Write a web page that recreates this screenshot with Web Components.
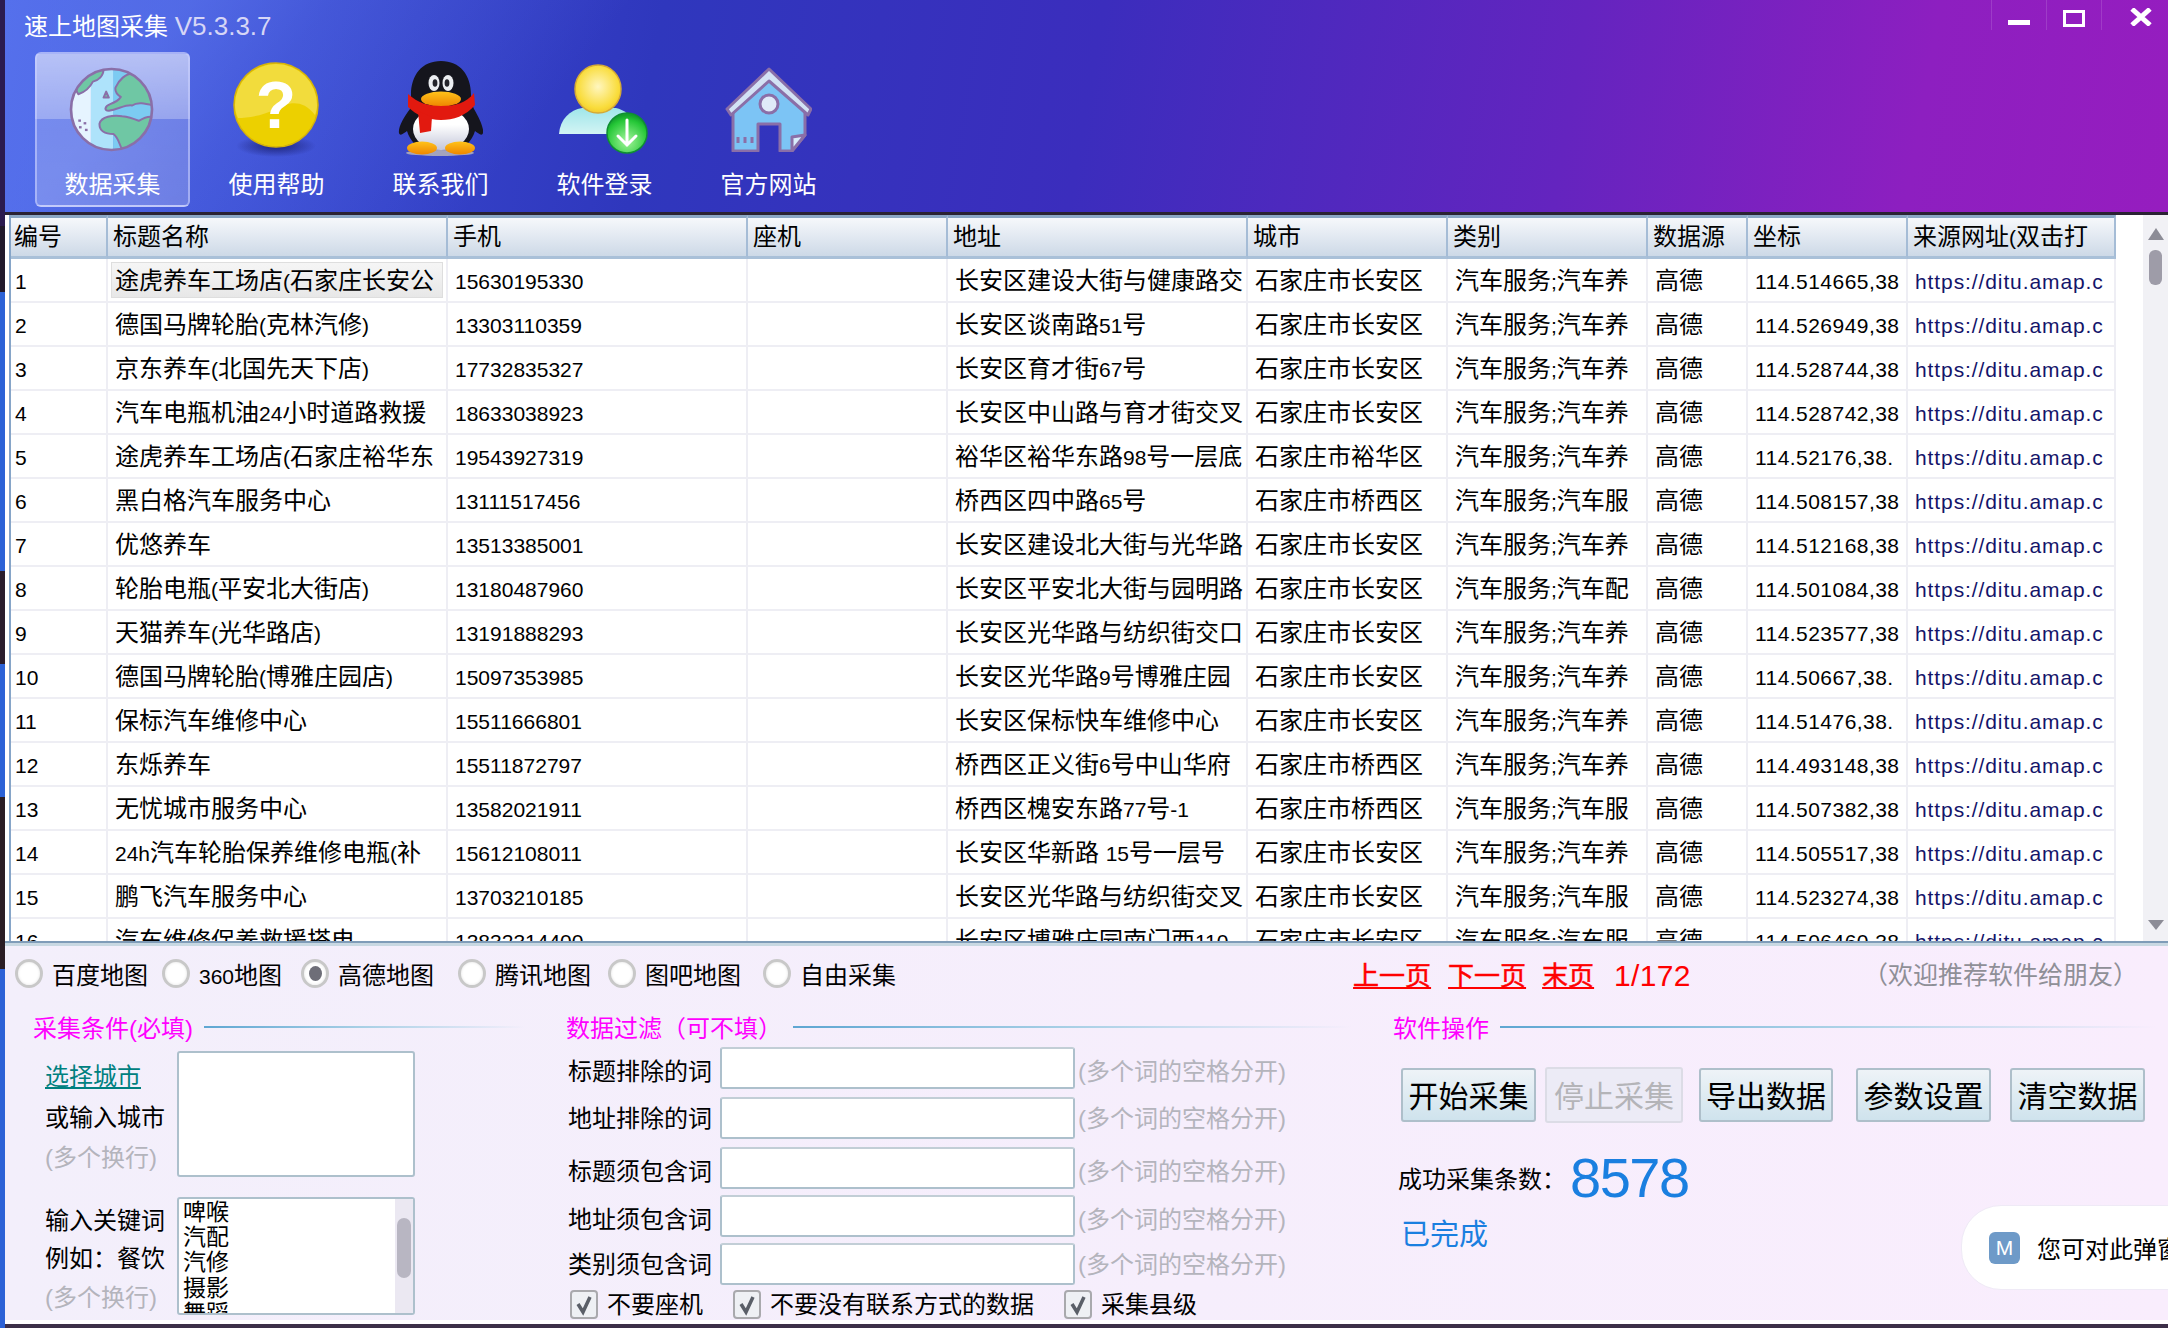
<!DOCTYPE html>
<html lang="zh">
<head>
<meta charset="utf-8">
<title>速上地图采集</title>
<style>
    html, body { margin: 0; padding: 0; width: 2168px; height: 1328px; overflow: hidden; background: #2a2233; }
    body { font-family: "Liberation Sans", "Noto Sans CJK SC", sans-serif; font-size: 24px; color: #000; }
</style>
</head>
<body>

<app-window>
    <app-header>
        <span slot="title">速上地图采集 <span style="font-size:26px;color:#d6d6f6">V5.3.3.7</span></span>
        <tool-tile icon="globe" active>数据采集</tool-tile>
        <tool-tile icon="help">使用帮助</tool-tile>
        <tool-tile icon="penguin">联系我们</tool-tile>
        <tool-tile icon="user">软件登录</tool-tile>
        <tool-tile icon="house">官方网站</tool-tile>
    </app-header>

    <data-table></data-table>

    <control-panel>
        <radio-opt slot="top">百度地图</radio-opt>
        <radio-opt slot="top" style="margin-left:14px"><span style="font-size:21px">360</span>地图</radio-opt>
        <radio-opt slot="top" style="margin-left:19px" checked>高德地图</radio-opt>
        <radio-opt slot="top" style="margin-left:24px">腾讯地图</radio-opt>
        <radio-opt slot="top" style="margin-left:17px">图吧地图</radio-opt>
        <radio-opt slot="top" style="margin-left:22px">自由采集</radio-opt>
        <page-nav slot="top"></page-nav>
        <span slot="top" style="margin-left:auto;padding-right:30px;font-size:25px;color:#8f8f97">（欢迎推荐软件给朋友）</span>

        <section-title slot="col1">采集条件(必填)</section-title>
        <label-box slot="col1" style="margin-top:7px" lh="40.5" h="126">
            <a style="color:#008080;text-decoration:underline">选择城市</a><br>
            或输入城市<br>
            <span style="color:#b4b4bc">(多个换行)</span>
        </label-box>
        <label-box slot="col1" style="margin-top:18px;--pt:5px" lh="38.5" h="118" list="啤喉,汽配,汽修,摄影,舞蹈">
            输入关键词<br>
            例如：餐饮<br>
            <span style="color:#b4b4bc">(多个换行)</span>
        </label-box>

        <section-title slot="col2">数据过滤（可不填）</section-title>
        <filter-row slot="col2" style="margin-top:3px">标题排除的词</filter-row>
        <filter-row slot="col2" style="margin-top:8px;--up:6px">地址排除的词</filter-row>
        <filter-row slot="col2" style="margin-top:8px">标题须包含词</filter-row>
        <filter-row slot="col2" style="margin-top:6px">地址须包含词</filter-row>
        <filter-row slot="col2" style="margin-top:6px;--up:6px">类别须包含词</filter-row>
        <check-row slot="col2">
            <check-opt>不要座机</check-opt>
            <check-opt>不要没有联系方式的数据</check-opt>
            <check-opt>采集县级</check-opt>
        </check-row>

        <section-title slot="col3" style="margin-right:11px">软件操作</section-title>
        <action-row slot="col3">
            <soft-button style="width:135px">开始采集</soft-button>
            <soft-button style="width:138px;margin-left:9px" disabled>停止采集</soft-button>
            <soft-button style="width:134px;margin-left:16px">导出数据</soft-button>
            <soft-button style="width:135px;margin-left:23px">参数设置</soft-button>
            <soft-button style="width:135px;margin-left:19px">清空数据</soft-button>
        </action-row>
        <count-line slot="col3" value="8578" status="已完成">成功采集条数：</count-line>

        <note-popup slot="over">您可对此弹窗</note-popup>
    </control-panel>
</app-window>

<script>
// every element here is only markup + css, so one small helper covers them
function define(name, css, markup, setup){
    customElements.define(name, class extends HTMLElement {
        constructor(){
            super();
            this.attachShadow({mode: 'open'});
        }
        connectedCallback(){
            let body = typeof markup === 'function' ? markup(this) : markup;
            this.shadowRoot.innerHTML = `<style>${css}</style>${body}`;
            if(setup) setup(this, this.shadowRoot);
        }
    });
}

const ICONS = {
    globe: `<svg width="85" height="87" viewBox="0 0 256 256" style="margin:12px 0 0 -2px">
        <defs><clipPath id="g"><circle cx="128" cy="128" r="122"/></clipPath></defs>
        <g clip-path="url(#g)">
            <rect width="66" height="256" fill="#e6f4ff"/>
            <rect x="66" width="67" height="256" fill="#aee3fb"/>
            <rect x="133" width="123" height="256" fill="#7ccbf2"/>
            <g fill="#6fc7a4" stroke="#8a6fa8" stroke-width="6" stroke-linejoin="round">
                <path d="M26 52C48 20 78 6 104 6C104 28 88 40 72 44C62 64 46 76 28 82C20 72 20 62 26 52Z"/>
                <path d="M140 62C150 40 170 18 196 20C226 44 248 80 254 116C230 110 206 104 190 116C174 112 150 126 120 132C104 132 108 118 124 112C140 106 150 100 156 90C146 84 138 74 140 62Z"/>
                <path d="M92 170C98 150 130 144 160 148C180 150 196 156 210 162C230 150 240 148 250 150C238 200 212 244 164 254C150 236 152 216 134 202C108 202 90 192 92 170Z"/>
                <path d="M104 92L112 74L120 92Z"/>
            </g>
            <g fill="#8a6fa8"><rect x="28" y="158" width="8" height="7"/><rect x="44" y="166" width="8" height="7"/><rect x="30" y="178" width="8" height="7"/><rect x="48" y="186" width="8" height="7"/></g>
        </g>
        <circle cx="128" cy="128" r="122" fill="none" stroke="#8a6fa8" stroke-width="8"/>
    </svg>`,
    help: `<svg width="89" height="95" viewBox="0 0 89 95" style="margin-top:8px">
        <defs>
            <radialGradient id="s"><stop offset="0" stop-color="#12145c" stop-opacity=".75"/><stop offset="1" stop-color="#12145c" stop-opacity="0"/></radialGradient>
        </defs>
        <ellipse cx="44" cy="84" rx="40" ry="11" fill="url(#s)"/>
        <circle cx="44" cy="43" r="42" fill="#ecd000" stroke="#d6b30a" stroke-width="1.5"/>
        <path d="M3 43A41 41 0 0 1 85 43C85 47 84 50 83 53C70 36 55 41 44 47C30 54 15 56 6 56C4 52 3 47 3 43Z" fill="#f2dc3c"/>
        <text x="44" y="66" text-anchor="middle" font-family="Liberation Sans" font-weight="700" font-size="66" fill="#fff">?</text>
    </svg>`,
    penguin: `<svg width="85" height="95" viewBox="0 0 85 95" style="margin:7px 0 0 -1px">
        <defs>
            <linearGradient id="b" x1="0" y1="0" x2="0" y2="1"><stop offset=".4" stop-color="#fff"/><stop offset="1" stop-color="#c4c7da"/></linearGradient>
            <linearGradient id="o" x1="0" y1="0" x2="0" y2="1"><stop offset="0" stop-color="#ffc21a"/><stop offset="1" stop-color="#ee8600"/></linearGradient>
        </defs>
        <ellipse cx="42" cy="92" rx="34" ry="3" fill="#a3a3bd"/>
        <path d="M43 0C62 0 73 14 73 34C73 40 74 44 76 48C82 58 86 68 85 72C84 76 80 72 77 70C74 80 66 88 60 88L26 88C20 88 12 80 9 70C6 72 2 76 1 72C0 66 6 56 12 48C13 42 13 38 13 34C13 14 24 0 43 0Z" fill="#15151d"/>
        <ellipse cx="43" cy="68" rx="28" ry="21" fill="url(#b)"/>
        <ellipse cx="36" cy="22" rx="5.5" ry="8" fill="#eceef2"/><ellipse cx="50" cy="22" rx="5.5" ry="8" fill="#eceef2"/>
        <ellipse cx="37" cy="22" rx="2.4" ry="3.8" fill="#23232b"/><ellipse cx="49" cy="22" rx="2.4" ry="3.8" fill="#23232b"/>
        <ellipse cx="43" cy="38" rx="20" ry="7.5" fill="url(#o)"/>
        <path d="M10 33C20 42 30 45 43 45C58 45 68 42 76 32L77 44C68 55 55 59 43 59C30 59 18 54 10 46Z" fill="#e2190f"/>
        <path d="M20 50L34 56L33 70L22 72Z" fill="#e2190f"/>
        <ellipse cx="24" cy="87" rx="15" ry="6.5" fill="url(#o)"/><ellipse cx="62" cy="87" rx="15" ry="6.5" fill="url(#o)"/>
    </svg>`,
    user: `<svg width="90" height="90" viewBox="0 0 90 90" style="margin:10px 0 0 -4px">
        <defs>
            <radialGradient id="h" cx=".5" cy=".45" r=".6"><stop offset="0" stop-color="#fff6bf"/><stop offset=".75" stop-color="#f9dc3a"/><stop offset="1" stop-color="#eec22a"/></radialGradient>
            <linearGradient id="t" x1="0" y1="0" x2="0" y2="1"><stop offset="0" stop-color="#9fe6ea"/><stop offset="1" stop-color="#d3f4f4"/></linearGradient>
            <radialGradient id="c" cx=".5" cy=".7" r=".65"><stop offset="0" stop-color="#a2f59a"/><stop offset=".8" stop-color="#25c737"/><stop offset="1" stop-color="#13a02c"/></radialGradient>
        </defs>
        <path d="M1 70C2 55 12 46 24 44L58 44C66 46 72 50 75 58L75 70Z" fill="url(#t)"/>
        <ellipse cx="40" cy="25" rx="23" ry="24" fill="url(#h)" stroke="#d4a937" stroke-width="1.5"/>
        <circle cx="69" cy="69" r="20" fill="url(#c)" stroke="#0f8f33" stroke-width="1.5"/>
        <path d="M69 56V81M60 72L69 81L78 72" fill="none" stroke="#fff" stroke-width="3" stroke-linecap="round"/>
    </svg>`,
    house: `<svg width="87" height="85" viewBox="0 0 87 85" style="margin-top:13px">
        <g stroke="#8a6fa8" stroke-width="3" stroke-linejoin="round">
            <path d="M8 42L44 10L80 42V68L67 84H55V57H33V84H8Z" fill="#7cc4f5"/>
            <path d="M2 42L44 2L86 42L83 48L44 14L6 48Z" fill="#d3e2f5"/>
            <path d="M67 84V70L80 68Z" fill="#d8ecfb"/>
            <circle cx="44" cy="37" r="9" fill="#dfeaf8"/>
            <path d="M13 70V76M20 70V76M27 70V76" fill="none"/>
        </g>
    </svg>`
};

define('app-window', `
    :host { display: flex; width: 2168px; height: 1328px; }
    .edge { width: 5px; flex: none; background: linear-gradient(180deg, #2b1b50 0 17%, #21192b 17% 22%, #2c62d6 22% 43%, #2a1d2c 43% 50%, #2c62d6 50% 60%, #2a1d24 60% 73%, #2c62d6 73% 100%); }
    .main { flex: 1; min-width: 0; display: flex; flex-direction: column; }
    .foot { height: 4px; background: #fff; flex: none; }
    .desk { height: 4px; background: #3c2f48; flex: none; }
`, `<div class="edge"></div><div class="main"><slot></slot><div class="foot"></div><div class="desk"></div></div>`);

define('app-header', `
    :host { display: block; flex: none; height: 212px; color: #fff; overflow: hidden;
        background:
            linear-gradient(128deg, rgba(120,150,255,.38) 0 8%, rgba(120,150,255,.2) 14%, rgba(120,150,255,0) 27%),
            linear-gradient(100deg, #3f58e0 0%, #2f37bd 30%, #3b2dbd 50%, #6424bf 72%, #8d1fc0 88%, #961dbf 100%); }
    .bar { display: flex; height: 52px; padding-left: 19px; line-height: 52px; }
    .ctl { margin-left: auto; display: flex; height: 30px; line-height: 0; }
    .ctl div { box-sizing: border-box; height: 30px; width: 55px; display: flex; justify-content: center;
        border-left: 1px solid rgba(255,255,255,.13); }
    .ctl div:last-child { width: 67px; padding-left: 12px; }
    .min { width: 22px; height: 5px; margin-top: 20px; background: #fff; }
    .max { box-sizing: border-box; width: 22px; height: 17px; margin-top: 10px; border: 3px solid #fff; }
    svg { margin-top: 8px; }
    .tiles { display: flex; gap: 9px; padding-left: 30px; }
`, `<div class="bar"><slot name="title"></slot>
        <div class="ctl"><div><span class="min"></span></div><div><span class="max"></span></div>
        <div><svg width="22" height="18" viewBox="0 0 22 18"><path d="M2 1L20 17M20 1L2 17" stroke="#fff" stroke-width="5"/></svg></div></div>
    </div>
    <div class="tiles"><slot></slot></div>`);

define('tool-tile', `
    :host { display: flex; flex-direction: column; align-items: center; box-sizing: border-box; width: 155px; height: 155px;
        border: 2px solid transparent; border-radius: 6px; color: #fff; }
    :host([active]) { border-color: rgba(205,212,255,.55);
        background: linear-gradient(180deg, rgba(255,255,255,.58) 0, rgba(255,255,255,.42) 43%, rgba(255,255,255,.2) 43%, rgba(255,255,255,.22) 100%); }
    .ic { height: 107px; flex: none; }
    svg { display: block; }
    .tx { line-height: 48px; }
`, el => `<div class="ic">${ICONS[el.getAttribute('icon')]}</div><div class="tx"><slot></slot></div>`);

const COLUMNS = [98, 340, 300, 200, 300, 200, 200, 100, 160, 208];
const HEADS = ['编号', '标题名称', '手机', '座机', '地址', '城市', '类别', '数据源', '坐标', '来源网址(双击打'];
const ROWS = [
    ['途虎养车工场店(石家庄长安公', '15630195330', '长安区建设大街与健康路交', '长安区', '养', '114.514665,38'],
    ['德国马牌轮胎(克林汽修)', '13303110359', '长安区谈南路51号', '长安区', '养', '114.526949,38'],
    ['京东养车(北国先天下店)', '17732835327', '长安区育才街67号', '长安区', '养', '114.528744,38'],
    ['汽车电瓶机油24小时道路救援', '18633038923', '长安区中山路与育才街交叉', '长安区', '养', '114.528742,38'],
    ['途虎养车工场店(石家庄裕华东', '19543927319', '裕华区裕华东路98号一层底', '裕华区', '养', '114.52176,38.'],
    ['黑白格汽车服务中心', '13111517456', '桥西区四中路65号', '桥西区', '服', '114.508157,38'],
    ['优悠养车', '13513385001', '长安区建设北大街与光华路', '长安区', '养', '114.512168,38'],
    ['轮胎电瓶(平安北大街店)', '13180487960', '长安区平安北大街与园明路', '长安区', '配', '114.501084,38'],
    ['天猫养车(光华路店)', '13191888293', '长安区光华路与纺织街交口', '长安区', '养', '114.523577,38'],
    ['德国马牌轮胎(博雅庄园店)', '15097353985', '长安区光华路9号博雅庄园', '长安区', '养', '114.50667,38.'],
    ['保标汽车维修中心', '15511666801', '长安区保标快车维修中心', '长安区', '养', '114.51476,38.'],
    ['东烁养车', '15511872797', '桥西区正义街6号中山华府', '桥西区', '养', '114.493148,38'],
    ['无忧城市服务中心', '13582021911', '桥西区槐安东路77号-1', '桥西区', '服', '114.507382,38'],
    ['24h汽车轮胎保养维修电瓶(补', '15612108011', '长安区华新路 15号一层号', '长安区', '养', '114.505517,38'],
    ['鹏飞汽车服务中心', '13703210185', '长安区光华路与纺织街交叉', '长安区', '服', '114.523274,38'],
    ['汽车维修保养救援搭电', '13832314400', '长安区博雅庄园南门西110', '长安区', '服', '114.506460,38']
];

// ascii runs in the old app are a smaller, narrower font than the chinese
function mixed(text){
    return text.replace(/[\x21-\x7e]+/g, m => `<span class="n">${m}</span>`);
}

define('data-table', `
    :host { display: flex; flex: none; height: 726px; margin-top: 3px; background: #fff; overflow: hidden; }
    .wrap { box-sizing: border-box; margin-left: 4px; width: 2107px; border-left: 2px solid #86a5c8; overflow: hidden; flex: none; }
    .grid { display: grid; grid-template-columns: ${COLUMNS.map((c, i) => (i == 0 ? c - 1 : c) + 'px').join(' ')}; grid-auto-rows: 44px; width: 2106px; }
    .h { box-sizing: border-box; height: 44px; line-height: 38px; padding-left: 5px; white-space: nowrap; overflow: hidden;
        background: linear-gradient(180deg, #f6f8fb, #cdd9e7); border-top: 3px solid #8aa6c4; border-bottom: 3px solid #a9c0d8; border-right: 2px solid #a5bcd6; }
    .h:first-child { padding-left: 3px; }
    .h:last-child { border-right-color: #8fb0d4; }
    .c { box-sizing: border-box; height: 44px; line-height: 43px; padding-left: 7px; white-space: nowrap; overflow: hidden;
        border-right: 2px solid #eeeef4; border-bottom: 2px solid #eeeef4; }
    .c.first { padding-left: 4px; }
    .n { font-size: 21px; }
    .coord .n { letter-spacing: .45px; }
    .url .n { letter-spacing: .9px; color: #14146a; }
    .sel { background: linear-gradient(180deg, #f7f7f7, #e6e6e6); box-shadow: inset 0 0 0 3px #fff, inset 0 0 0 4px #dedede; }
    .sb { margin-left: 27px; width: 25px; flex: none; background: #f1f1f5; display: flex; flex-direction: column; align-items: center; }
    .up { margin-top: 13px; width: 0; height: 0; border-left: 8px solid transparent; border-right: 8px solid transparent; border-bottom: 12px solid #8c8c96; }
    .dn { margin-top: auto; margin-bottom: 11px; width: 0; height: 0; border-left: 8px solid transparent; border-right: 8px solid transparent; border-top: 10px solid #8c8c96; }
    .th { margin-top: 10px; width: 13px; height: 35px; border-radius: 6px; background: #9e9ca8; }
`, () => {
    let head = HEADS.map(h => `<div class="h">${mixed(h)}</div>`).join('');
    let rows = ROWS.map((r, i) => {
        let cells = [
            `<div class="c first">${mixed(String(i + 1))}</div>`,
            `<div class="c${i == 0 ? ' sel' : ''}">${mixed(r[0])}</div>`,
            `<div class="c">${mixed(r[1])}</div>`,
            `<div class="c"></div>`,
            `<div class="c">${mixed(r[2])}</div>`,
            `<div class="c">石家庄市${r[3]}</div>`,
            `<div class="c">汽车服务${mixed(';')}汽车${r[4]}</div>`,
            `<div class="c">高德</div>`,
            `<div class="c coord">${mixed(r[5])}</div>`,
            `<div class="c url">${mixed('https://ditu.amap.c')}</div>`
        ];
        return cells.join('');
    }).join('');
    return `<div class="wrap"><div class="grid">${head}${rows}</div></div>
        <div class="sb"><div class="up"></div><div class="th"></div><div class="dn"></div></div>`;
});

define('control-panel', `
    :host { display: block; flex: none; height: 379px; box-sizing: border-box; position: relative; overflow: hidden;
        border-top: 2px solid #7f9cb8; box-shadow: inset 0 3px 0 #c8d8e2; padding-top: 3px;
        background: linear-gradient(90deg, #f3effb, #f6eefc 55%, #f9edfd); }
    .top { display: flex; align-items: center; height: 54px; padding-left: 10px; }
    .cols { display: grid; grid-template-columns: 533px 827px 1fr; margin-top: 10px; padding-left: 28px; }
    .cols > div { display: flex; flex-direction: column; min-width: 0; }
    .c1, .c2 { padding-right: 41px; }
`, `<div class="top"><slot name="top"></slot></div>
    <div class="cols">
        <div class="c1"><slot name="col1"></slot></div>
        <div class="c2"><slot name="col2"></slot></div>
        <div class="c3"><slot name="col3"></slot></div>
    </div>
    <slot name="over"></slot>`);

define('radio-opt', `
    :host { display: flex; align-items: center; gap: 9px; flex: none; }
    .r { box-sizing: border-box; width: 28px; height: 29px; border-radius: 50%; border: 3px solid #c8c8c8; background: #fff;
        box-shadow: inset 0 0 3px #e2e2e2; display: flex; align-items: center; justify-content: center; }
    .r i { display: block; width: 13px; height: 15px; border-radius: 50%; background: #6e6e78; }
`, el => `<span class="r">${el.hasAttribute('checked') ? '<i></i>' : ''}</span><span><slot></slot></span>`);

define('page-nav', `
    :host { display: flex; align-items: center; flex: none; margin-left: 457px; color: #ff0000; font-size: 26px; }
    a { text-decoration: underline; -webkit-text-stroke: .5px #ff0000; }
    a + a { margin-left: 17px; }
    a.e { margin-left: 16px; }
    span { margin: 5px 0 0 20px; font-size: 30px; letter-spacing: .3px; }
`, `<a>上一页</a><a>下一页</a><a class="e">末页</a><span>1/172</span>`);

define('section-title', `
    :host { display: flex; align-items: center; gap: 11px; height: 34px; color: #ff00ff; flex: none; }
    span { padding-bottom: 2px; }
    i { flex: 1; height: 2px; background: linear-gradient(90deg, #5ea6d2, #a9d0e6 50%, rgba(225,236,246,0)); }
`, `<span><slot></slot></span><i></i>`);

define('label-box', `
    :host { display: flex; flex: none; padding-left: 12px; }
    .l { width: 132px; flex: none; box-sizing: border-box; padding-top: var(--pt, 6px); }
    .b { box-sizing: border-box; width: 238px; background: #fff; border: 2px solid #adc0cc; border-radius: 3px; display: flex; overflow: hidden; }
    .t { flex: 1; padding: 1px 0 0 4px; font-size: 23px; line-height: 25.4px; overflow: hidden; }
    .s { width: 18px; flex: none; background: #ebe8f2; }
    .s i { display: block; width: 14px; height: 60px; margin: 19px 0 0 2px; border-radius: 7px; background: #b8b6c2; }
`, el => {
    let list = el.getAttribute('list');
    let inner = list ? `<div class="t">${list.split(',').join('<br>')}</div><div class="s"><i></i></div>` : '';
    return `<div class="l" style="line-height:${el.getAttribute('lh')}px"><slot></slot></div>
        <div class="b" style="height:${el.getAttribute('h')}px">${inner}</div>`;
});

define('filter-row', `
    :host { display: flex; align-items: center; height: 42px; flex: none; padding-left: 2px; }
    .l { width: 152px; flex: none; margin-top: calc(2px - var(--up, 0px)); }
    .i { box-sizing: border-box; width: 355px; height: 42px; background: #fff; border: 2px solid #adc0cc; border-top-color: #c2ced6; border-radius: 3px; flex: none; }
    .h { margin-left: 3px; color: #b4b4bc; margin-top: calc(2px - var(--up, 0px)); white-space: nowrap; }
`, `<span class="l"><slot></slot></span><span class="i"></span><span class="h">(多个词的空格分开)</span>`);

define('check-row', `
    :host { display: flex; gap: 30px; margin-top: 5px; padding-left: 4px; flex: none; line-height: 29px; }
`, `<slot></slot>`);

define('check-opt', `
    :host { display: flex; align-items: center; gap: 9px; flex: none; }
    .b { box-sizing: border-box; width: 28px; height: 29px; background: #eef0f4; border: 2px solid #a9a9ad; border-radius: 4px; }
    svg { display: block; }
`, `<span class="b"><svg width="24" height="25" viewBox="0 0 24 25"><path d="M6 12L11 20L18 5" fill="none" stroke="#5a5f68" stroke-width="3.5"/></svg></span><span><slot></slot></span>`);

define('action-row', `
    :host { display: flex; align-items: center; margin-top: 23px; padding-left: 8px; flex: none; height: 56px; }
`, `<slot></slot>`);

define('soft-button', `
    :host { display: flex; align-items: center; justify-content: center; box-sizing: border-box; height: 54px; flex: none; padding-bottom: 2px;
        font-size: 30px; border: 2px solid #aebfca; border-radius: 3px; background: linear-gradient(180deg, #eef3f7, #cfe3ed); }
    :host([disabled]) { height: 56px; color: #b4b4b8; border-color: #dcdce6; background: #ecebf6; }
`, `<slot></slot>`);

define('count-line', `
    :host { display: block; flex: none; margin-top: 26px; padding-left: 5px; }
    .r { display: flex; align-items: center; height: 56px; }
    b { font-weight: 400; font-size: 56px; letter-spacing: -1.5px; color: #1a7fe0; margin-left: 4px; }
    .s { margin-top: 10px; padding-left: 3px; font-size: 29px; line-height: 40px; color: #1a7fe0; }
`, el => `<div class="r"><span><slot></slot></span><b>${el.getAttribute('value')}</b></div><div class="s">${el.getAttribute('status')}</div>`);

define('note-popup', `
    :host { position: absolute; left: 1956px; top: 262px; width: 420px; height: 85px; box-sizing: border-box; display: flex; align-items: center; gap: 17px;
        padding-left: 27px; background: #fff; border: 1px solid #efeaf6; border-radius: 40px 0 0 40px; white-space: nowrap; }
    .m { width: 31px; height: 32px; border-radius: 6px; background: #6e9ac8; color: #fff; font-size: 21px; line-height: 32px; text-align: center; }
`, `<span class="m">M</span><span><slot></slot></span>`);
</script>
</body>
</html>
